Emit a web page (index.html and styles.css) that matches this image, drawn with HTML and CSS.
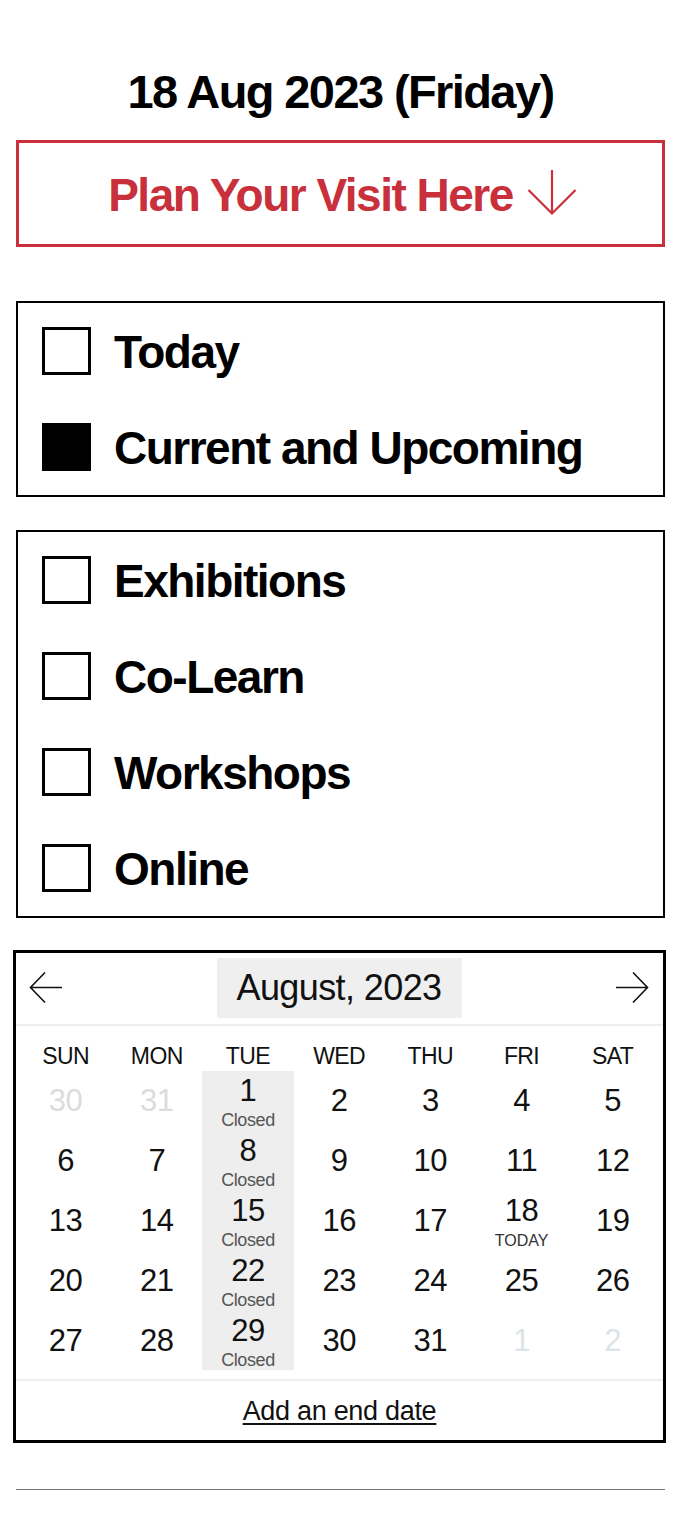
FILE: index.html
```html
<!DOCTYPE html>
<html lang="en">
<head>
<meta charset="utf-8">
<title>Plan Your Visit</title>
<link rel="stylesheet" href="styles.css">
</head>
<body>
<main class="page">
  <h1 class="date-heading">18 Aug 2023 (Friday)</h1>

  <a class="plan-btn" href="#plan">
    <span>Plan Your Visit Here</span>
    <svg class="plan-arrow" width="50" height="48" viewBox="0 0 50 48" aria-hidden="true">
      <path d="M25 1 V45 M1.5 21 L25 44.5 L48.5 21" fill="none" stroke="currentColor" stroke-width="2.2"/>
    </svg>
  </a>

  <section class="filter-box">
    <label class="filter-row"><span class="check"></span><span class="filter-label">Today</span></label>
    <label class="filter-row"><span class="check checked"></span><span class="filter-label">Current and Upcoming</span></label>
  </section>

  <section class="filter-box">
    <label class="filter-row"><span class="check"></span><span class="filter-label">Exhibitions</span></label>
    <label class="filter-row"><span class="check"></span><span class="filter-label">Co-Learn</span></label>
    <label class="filter-row"><span class="check"></span><span class="filter-label">Workshops</span></label>
    <label class="filter-row"><span class="check"></span><span class="filter-label">Online</span></label>
  </section>

  <section class="calendar">
    <div class="cal-head">
      <button class="cal-nav" aria-label="Previous month">
        <svg width="36" height="36" viewBox="0 0 36 36"><path d="M34 17.5 H3 M17 2.5 L2.5 17.5 L17 32.5" fill="none" stroke="#111" stroke-width="1.6"/></svg>
      </button>
      <div class="cal-title">August, 2023</div>
      <button class="cal-nav" aria-label="Next month">
        <svg width="36" height="36" viewBox="0 0 36 36"><path d="M2 17.5 H33 M19 2.5 L33.5 17.5 L19 32.5" fill="none" stroke="#111" stroke-width="1.6"/></svg>
      </button>
    </div>
    <div class="cal-grid">
      <div class="dow">SUN</div><div class="dow">MON</div><div class="dow">TUE</div><div class="dow">WED</div><div class="dow">THU</div><div class="dow">FRI</div><div class="dow">SAT</div>

      <div class="day muted">30</div><div class="day muted">31</div><div class="day closed first"><span class="num">1</span><span class="note">Closed</span></div><div class="day">2</div><div class="day">3</div><div class="day">4</div><div class="day">5</div>

      <div class="day">6</div><div class="day">7</div><div class="day closed"><span class="num">8</span><span class="note">Closed</span></div><div class="day">9</div><div class="day">10</div><div class="day">11</div><div class="day">12</div>

      <div class="day">13</div><div class="day">14</div><div class="day closed"><span class="num">15</span><span class="note">Closed</span></div><div class="day">16</div><div class="day">17</div><div class="day today"><span class="num">18</span><span class="note today-note">TODAY</span></div><div class="day">19</div>

      <div class="day">20</div><div class="day">21</div><div class="day closed"><span class="num">22</span><span class="note">Closed</span></div><div class="day">23</div><div class="day">24</div><div class="day">25</div><div class="day">26</div>

      <div class="day">27</div><div class="day">28</div><div class="day closed"><span class="num">29</span><span class="note">Closed</span></div><div class="day">30</div><div class="day">31</div><div class="day muted next">1</div><div class="day muted next">2</div>
    </div>
    <div class="cal-foot"><a href="#end" class="end-link">Add an end date</a></div>
  </section>

  <hr class="rule">
</main>
</body>
</html>
```

FILE: styles.css
```css
* { box-sizing: border-box; }

html, body {
  margin: 0;
  padding: 0;
  background: #fff;
}

body {
  font-family: "Liberation Sans", Arial, sans-serif;
  color: #000;
}

.page {
  width: 679px;
  padding: 0 14px 24px 16px;
  display: flex;
  flex-direction: column;
}

.date-heading {
  margin: 64px 0 20px;
  height: 56px;
  line-height: 56px;
  font-size: 47px;
  font-weight: 700;
  letter-spacing: -1.6px;
  text-align: center;
}

.plan-btn {
  height: 107px;
  border: 3px solid #c9303c;
  color: #c8303c;
  text-decoration: none;
  display: flex;
  align-items: center;
  justify-content: center;
  gap: 14px;
  padding: 2px 0 0 4px;
  font-size: 46px;
  font-weight: 700;
  letter-spacing: -1.5px;
}

.plan-arrow {
  display: block;
  margin-top: -4px;
}

.filter-box {
  border: 2px solid #000;
  margin-top: 33px;
}

.plan-btn + .filter-box {
  margin-top: 54px;
}

.filter-row {
  height: 96px;
  display: flex;
  align-items: center;
  gap: 23px;
  padding-left: 24px;
}

.check {
  width: 49px;
  height: 48px;
  border: 3px solid #000;
  flex: none;
}

.check.checked {
  background: #000;
}

.filter-label {
  font-size: 46px;
  font-weight: 700;
  letter-spacing: -1.5px;
  padding-top: 2px;
}

.calendar {
  margin: 32px -1px 0 -3px;
  border: 3px solid #000;
  display: flex;
  flex-direction: column;
}

.cal-head {
  display: flex;
  align-items: center;
  justify-content: space-between;
  padding: 5px 13px 6px 12px;
  border-bottom: 2px solid #eeeeee;
}

.cal-nav {
  background: none;
  border: 0;
  padding: 0;
  width: 36px;
  height: 36px;
  cursor: pointer;
}

.cal-nav svg { display: block; }

.cal-title {
  background: #efefef;
  width: 245px;
  height: 60px;
  line-height: 60px;
  text-align: center;
  font-size: 36px;
  letter-spacing: -0.6px;
  color: #111;
}

.cal-grid {
  display: grid;
  grid-template-columns: repeat(7, 91.2px);
  grid-template-rows: 44px repeat(5, 60px);
  padding: 0 6px 9px 4px;
  border-bottom: 2px solid #eeeeee;
}

.dow {
  display: flex;
  align-items: flex-end;
  justify-content: center;
  padding-bottom: 0;
  font-size: 23px;
  letter-spacing: -0.6px;
  color: #111;
}

.day {
  display: flex;
  flex-direction: column;
  align-items: center;
  justify-content: center;
  font-size: 31px;
  letter-spacing: -0.5px;
  color: #111;
  padding-top: 2px;
}

.day.muted { color: #dcdcdc; }
.day.muted.next { color: #dde4e7; }

.day.closed,
.day.today {
  justify-content: flex-start;
  padding-top: 6px;
}

.day.closed {
  background: #eeeeee;
}

.day.closed.first { margin-top: 1px; padding-top: 5px; }

.num {
  line-height: 30px;
}

.note {
  font-size: 18px;
  line-height: 19px;
  color: #555;
  letter-spacing: -0.4px;
  margin-top: 5px;
}

.today-note {
  font-size: 16px;
  color: #333;
  letter-spacing: 0;
  margin-top: 5px;
}

.cal-foot {
  height: 59px;
  display: flex;
  align-items: center;
  justify-content: center;
  padding-top: 2px;
}

.end-link {
  font-size: 27px;
  letter-spacing: -0.3px;
  color: #111;
  text-decoration: underline;
  text-decoration-thickness: 2px;
  text-underline-offset: 3px;
}

.rule {
  margin: 46px 0 0;
  border: 0;
  border-top: 1px solid #777;
  height: 0;
}
```
